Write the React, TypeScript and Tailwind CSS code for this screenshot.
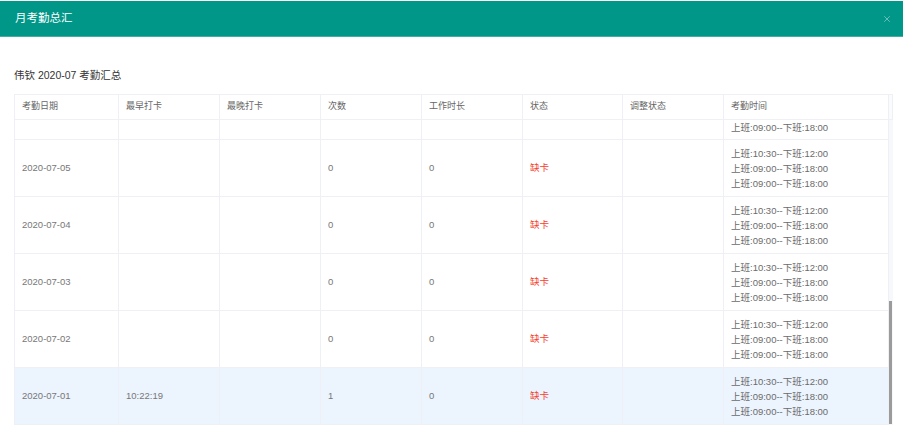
import { X } from "lucide-react";

type Row = {
  date: string;
  early: string;
  late: string;
  count: string;
  hours: string;
  status: string;
  adjust: string;
  times: string[];
  active?: boolean;
};

const TIMES = ["上班:10:30--下班:12:00", "上班:09:00--下班:18:00", "上班:09:00--下班:18:00"];

const rows: Row[] = [
  { date: "2020-07-05", early: "", late: "", count: "0", hours: "0", status: "缺卡", adjust: "", times: TIMES },
  { date: "2020-07-04", early: "", late: "", count: "0", hours: "0", status: "缺卡", adjust: "", times: TIMES },
  { date: "2020-07-03", early: "", late: "", count: "0", hours: "0", status: "缺卡", adjust: "", times: TIMES },
  { date: "2020-07-02", early: "", late: "", count: "0", hours: "0", status: "缺卡", adjust: "", times: TIMES },
  { date: "2020-07-01", early: "10:22:19", late: "", count: "1", hours: "0", status: "缺卡", adjust: "", times: TIMES, active: true },
];

const heads = ["考勤日期", "最早打卡", "最晚打卡", "次数", "工作时长", "状态", "调整状态", "考勤时间"];

const cols = "grid grid-cols-[104px_101px_101px_101px_101px_100px_101px_165px]";
const cell = "flex items-center border-r border-[#eef0f6] pl-[7px]";

export default function App() {
  return (
    <div
      className="relative h-[436px] w-[903px] overflow-hidden bg-white pt-px"
      style={{ fontFamily: '"Liberation Sans", "Noto Sans CJK SC", sans-serif' }}
    >
      <div className="flex h-9 items-center justify-between border-b border-[#45aca2] bg-[#009688] pl-[15px] pr-[11px]">
        <span className="text-[11.5px] text-white">月考勤总汇</span>
        <X size={10} strokeWidth={1.3} className="text-white/75" />
      </div>

      <div className="pl-[14px] pt-[31px] text-[10.5px] leading-[14px] text-[#333]">伟钦 2020-07 考勤汇总</div>

      <div className="ml-[14px] mt-3 w-[879px]">
        {/* header */}
        <div className="flex h-[26px] border-b border-l border-t border-[#eef0f6]">
          <div className={cols}>
            {heads.map((h) => (
              <div key={h} className={`${cell} text-[9px] text-[#666]`}>
                {h}
              </div>
            ))}
          </div>
          <div className="w-1 border-r border-[#eef0f6] bg-[#fafbfd]" />
        </div>

        {/* body, scrolled: only the tail of 2020-07-06 shows */}
        <div className="flex h-[305px]">
          <div className="h-full overflow-hidden border-l border-[#eef0f6] text-[9.5px] text-[#777]">
            <div className={`${cols} h-[20px] border-b border-[#eef0f6]`}>
              <div className={cell} />
              <div className={cell} />
              <div className={cell} />
              <div className={cell} />
              <div className={cell} />
              <div className={cell} />
              <div className={cell} />
              <div className={`${cell} !items-start leading-[15px] text-[#6b6b6b]`}>上班:09:00--下班:18:00</div>
            </div>
            {rows.map((r) => (
              <div
                key={r.date}
                className={`${cols} h-[57px] border-b border-[#eef0f6] ${r.active ? "bg-[#ecf4fe]" : ""}`}
              >
                <div className={cell}>{r.date}</div>
                <div className={cell}>{r.early}</div>
                <div className={cell}>{r.late}</div>
                <div className={cell}>{r.count}</div>
                <div className={cell}>{r.hours}</div>
                <div className={`${cell} text-[#f5412e]`}>{r.status}</div>
                <div className={cell}>{r.adjust}</div>
                <div className={`${cell} flex-col !items-start justify-center leading-[15px] text-[#6b6b6b]`}>
                  {r.times.map((t, i) => (
                    <span key={i}>{t}</span>
                  ))}
                </div>
              </div>
            ))}
          </div>
          <div className="w-1 bg-[#f7f8fb]">
            <div className="mt-[181px] h-[123px] w-[3px] bg-[#9b9b9b]" />
          </div>
        </div>
      </div>
    </div>
  );
}
